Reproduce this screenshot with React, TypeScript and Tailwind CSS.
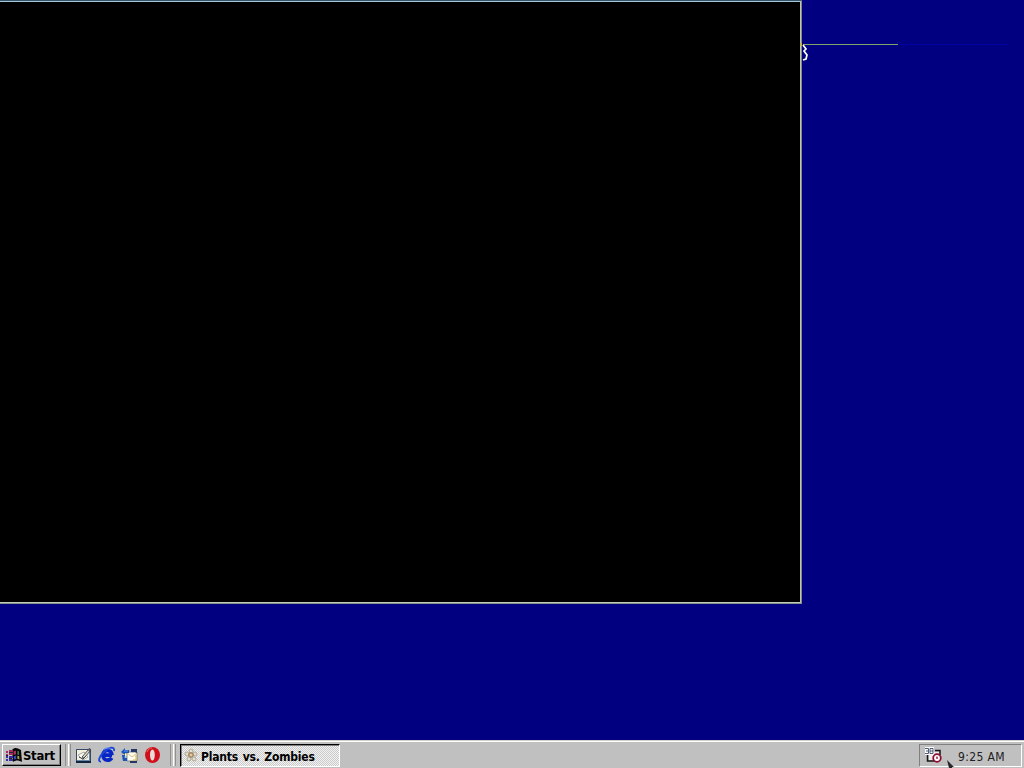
import type { ReactNode } from 'react';

const font = "font-['DejaVu_Sans_Condensed','DejaVu_Sans',sans-serif]";

function WindowsLogo() {
  return (
    <svg width="17" height="16" viewBox="0 0 17 16">
      <path d="M7 3c3-3 5-2 9 0l1 12c-4-2-6-2-9 0z" fill="#080808" />
      <path d="M8.5 4.5l2.5-1v3.7l-2.3.8z" fill="#a23257" />
      <path d="M12.4 3.7l1.5.6.2 3.7-1.7-.6z" fill="#377d55" />
      <path d="M8.8 9.2l2.3-.8v3.5l-2.1.7z" fill="#3948b5" />
      <path d="M12.4 8.7l1.8.5.2 3.1-2-.5z" fill="#aaa050" />
      <path d="M1 4h2v2H1zM4 3h4v2H4zM1 7h2v1H1zM4 6h4v2H4z" fill="#a72a62" />
      <path d="M1 9h2v2H1zM4 9h4v2H4zM1 12h2v2H1zM4 12h4v2H4z" fill="#3430a0" />
      <path d="M4 5h3v1H4zM1 8h2v1H1zM4 11h3v1H4z" fill="#29213f" />
    </svg>
  );
}

function DesktopIcon() {
  return (
    <svg width="17" height="17" viewBox="0 0 17 17">
      <path d="M1.5 2.5h14v12h-14z" fill="#688aa8" stroke="#354965" />
      <path d="M2 3h12v10H2z" fill="#f5f1df" />
      <path d="M1 15h15" stroke="#15253d" strokeWidth="2" />
      <path d="M3 8l5 5 5-3-4-5z" fill="#fffdf0" stroke="#8a9199" strokeWidth=".8" />
      <path d="M4 10l4 2 3-3" fill="none" stroke="#383f4a" />
      <path d="M7 10l7-8 2 1-7 8z" fill="#e4dfcf" stroke="#222" strokeWidth=".8" />
      <path d="M13 2l2-1 1 2-2 2z" fill="#4d5369" />
    </svg>
  );
}

function ExplorerIcon() {
  return (
    <svg width="18" height="18" viewBox="0 0 18 18" fill="none">
      <path d="M14 9.2H5.1C5 6.3 6.8 4.5 9.4 4.5S13.7 6.3 14 9.2M5.1 9.5c.2 3 2 4.7 4.4 4.7 1.8 0 3.3-.8 4.3-2.3" stroke="#0725c4" strokeWidth="3.7" />
      <path d="M3 15.5C-.5 16 1 10.5 6 6c5-5 11-6 10-1" stroke="#1d46d9" strokeWidth="1.8" />
      <path d="M5 4c3-3 6-2 8-1" stroke="#5f89f3" />
    </svg>
  );
}

function MailIcon() {
  return (
    <svg width="18" height="17" viewBox="0 0 18 17">
      <path d="M2 6h9v7H2z" fill="#fff1b7" stroke="#8d8c82" strokeWidth=".7" />
      <path d="M6 5h10v9H6z" fill="#fffced" stroke="#77715f" strokeWidth=".8" />
      <path d="M6 6l5 4 5-4" fill="none" stroke="#c4b383" strokeWidth=".8" />
      <path d="M0 5l4-4v2h4v3H4v2zM1 8h3v3h2v3H2z" fill="#1c54bd" />
      <path d="M10 2h6v4l-2-1h-4zM9 14h7v2H9z" fill="#253765" />
      <path d="M3 4h4M3 10h3" stroke="#62a0ea" />
      <path d="M14 9h1v4h-3" fill="none" stroke="#ddb653" />
    </svg>
  );
}

function OperaIcon() {
  return (
    <svg width="17" height="18" viewBox="0 0 17 18">
      <ellipse cx="8.5" cy="9" rx="7.5" ry="8" fill="#cf101b" />
      <ellipse cx="8.4" cy="9" rx="2.4" ry="5.5" fill="#e8dcda" />
      <path d="M3 6c1-3 3-4 5-4" fill="none" stroke="#ed6260" />
    </svg>
  );
}

function GameIcon() {
  return (
    <svg width="15" height="15" viewBox="0 0 15 15">
      <circle cx="7" cy="3" r="2" fill="#e5dfd0" stroke="#b0a894" />
      <circle cx="3" cy="6" r="2" fill="#e5dfd0" stroke="#b0a894" />
      <circle cx="11" cy="6" r="2" fill="#e5dfd0" stroke="#b0a894" />
      <circle cx="5" cy="11" r="2" fill="#e5dfd0" stroke="#b0a894" />
      <circle cx="10" cy="11" r="2" fill="#e5dfd0" stroke="#b0a894" />
      <circle cx="7" cy="7" r="2.4" fill="#c69c6f" stroke="#998870" />
      <path d="M6 6h2v2H6z" fill="#e3cc9e" />
    </svg>
  );
}

function SchedulerIcon() {
  return (
    <svg width="17" height="17" viewBox="0 0 17 17">
      <path d="M2.5 7v7H10M10 3.5h5V8" stroke="#171717" strokeWidth="1.5" fill="none" />
      <path d="M4 5h10v8H4z" fill="#ededed" />
      <path d="M0 0h9v8H0z" fill="#fff" />
      <path d="M0 1.5h3.5v5H0M1 4h2M5 1.5h3v5H5zM5 4h3" stroke="#3b4966" strokeWidth=".9" fill="none" />
      <circle cx="12" cy="11" r="3.8" fill="#fff" stroke="#8c0e30" strokeWidth="1.8" />
      <path d="M12 9.5v2M11 11h2" stroke="#8c0e30" fill="none" />
    </svg>
  );
}

function Grip() {
  return (
    <div className="flex h-[22px] w-[7px] gap-[2px]">
      <div className="h-[22px] w-px bg-[#909090]" />
      <div className="h-[22px] w-[3px] border-x border-l-white border-r-[#909090] bg-[#d4d0c8]" />
    </div>
  );
}

function QuickButton({ children, label }: { children: ReactNode; label: string }) {
  return (
    <button aria-label={label} className="flex h-[22px] w-[23px] items-center justify-center">
      {children}
    </button>
  );
}

export default function App() {
  return (
    <div className={`relative flex h-screen w-screen flex-col overflow-hidden bg-[#000080] ${font}`}>
      <main className="relative min-h-0 flex-1">
        <div className="h-[604px] w-[802px] border-t border-r border-b border-t-[#35546a] border-r-[#858889] border-b-[#84918d]">
          <div className="h-[602px] w-[801px] border-t border-r border-b border-t-[#a5c5dc] border-r-[#c2c6b5] border-b-[#c2cbb5] bg-black" />
        </div>

        {/* Remains of the last desktop icon */}
        <svg className="absolute top-[42px] left-[800px]" width="210" height="21" viewBox="0 0 210 21" fill="none">
          <path d="M3 2.5h95" stroke="#79a66a" />
          <path d="M98 2.5h111" stroke="#0000a0" />
          <path d="M0 1h2v3H0z" fill="#c6b647" />
          <path d="M3 3l3 4-2 2 3 4-1 4-3 1" stroke="#fff" strokeWidth="1.7" />
        </svg>
      </main>

      <footer className="flex h-7 shrink-0 items-start border-t border-[#d4d0c8] bg-[#c0c0c0] shadow-[inset_0_1px_0_white]">
        <button className="mt-[3px] ml-[2px] flex h-[22px] w-[59px] items-center border border-t-white border-r-black border-b-black border-l-white pl-[2px] shadow-[inset_-1px_-1px_0_#808080]">
          <WindowsLogo />
          <span className="mt-[2px] ml-px text-[13px] leading-[18px] font-bold tracking-[-0.3px]">Start</span>
        </button>
        <div className="mt-[3px] ml-[4px] flex">
          <Grip />
          <div className="flex">
            <QuickButton label="Show Desktop"><DesktopIcon /></QuickButton>
            <QuickButton label="Internet Explorer"><ExplorerIcon /></QuickButton>
            <QuickButton label="Outlook Express"><MailIcon /></QuickButton>
            <QuickButton label="Opera"><OperaIcon /></QuickButton>
          </div>
        </div>
        <div className="mt-[3px] ml-[6px]"><Grip /></div>
        <button className="mt-[3px] ml-[3px] flex h-[23px] w-[160px] items-center border border-t-black border-r-white border-b-white border-l-black bg-[conic-gradient(#f2f2f2_25%,#cacaca_0_50%,#f2f2f2_0_75%,#cacaca_0)] bg-[length:2px_2px] pl-[3px] shadow-[inset_1px_1px_0_#808080]">
          <GameIcon />
          <span className="mt-[2px] ml-[2px] text-[12px] leading-[16px] font-bold whitespace-nowrap tracking-[-0.18px] [word-spacing:1px]">Plants vs. Zombies</span>
        </button>

        <div className="mt-[3px] mr-[2px] ml-auto flex h-[23px] w-[103px] items-center border border-t-[#808080] border-r-white border-b-white border-l-[#808080] pl-[5px]">
          <SchedulerIcon />
          <span className="mt-[2px] ml-[16px] text-[12px] leading-4 whitespace-nowrap text-[#202020] tracking-[0.35px]">9:25 AM</span>
        </div>
      </footer>

      <svg className="absolute right-[68px] bottom-0" width="9" height="8" viewBox="0 0 9 8">
        <path d="M0 0l7 7H5v1H2z" fill="#292729" />
      </svg>
    </div>
  );
}
